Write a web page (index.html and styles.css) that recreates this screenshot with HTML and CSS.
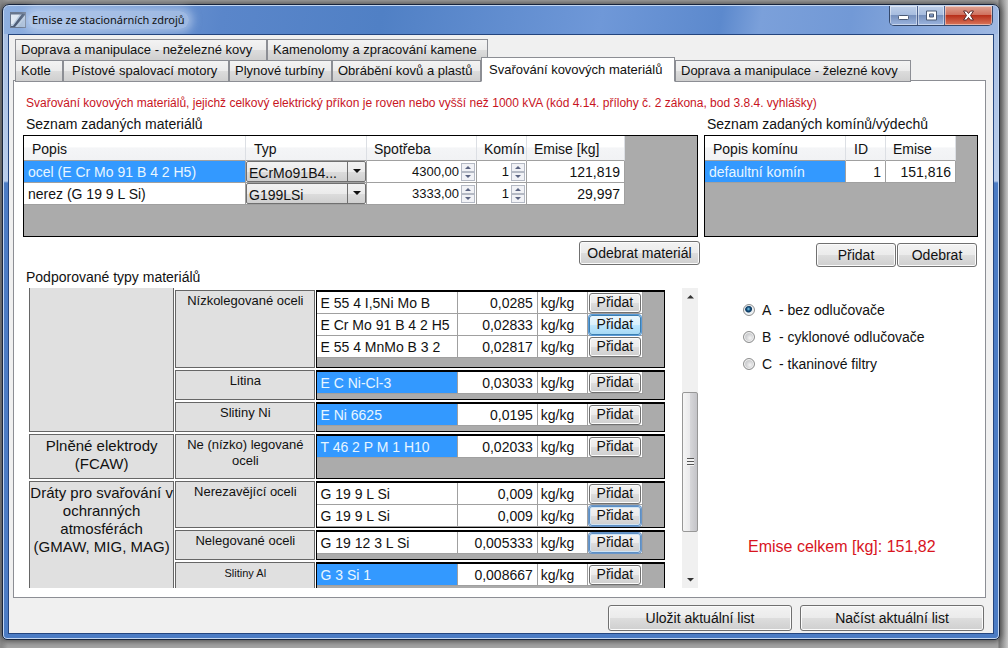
FILE: index.html
```html
<!DOCTYPE html>
<html lang="cs">
<head>
<meta charset="utf-8">
<title>Emise ze stacionárních zdrojů</title>
<link rel="stylesheet" href="styles.css">
</head>
<body>
<div class="window">
  <header class="titlebar">
    <svg class="app-icon" width="16" height="16" viewBox="0 0 16 16" aria-hidden="true">
      <rect x="0.5" y="0.5" width="15" height="15" fill="#b9cbe0" stroke="#6b7990"/>
      <path d="M1 2H10L3 12H1Z" fill="#dfe8f3"/>
      <path d="M1 1H15V2.500H1Z" fill="#66758d"/>
      <path d="M12 2H15V3L5 15H1V14H3Z" fill="#4c5c76"/>
      <path d="M15 6V15H8Z" fill="#a9bed8"/>
    </svg>
    <h1 class="title">Emise ze stacionárních zdrojů</h1>
    <div class="caption-buttons">
      <button class="cap cap-min" aria-label="Minimalizovat"><svg width="13" height="13" viewBox="0 0 13 13"><rect x="1.5" y="6.5" width="10" height="4" rx="1" fill="#fff" stroke="#4b5a74"/></svg></button>
      <button class="cap cap-max" aria-label="Maximalizovat"><svg width="13" height="13" viewBox="0 0 13 13"><path d="M1.500 2H11.500V11H1.500ZM4.500 5V8H8.500V5Z" fill="#fff" fill-rule="evenodd" stroke="#4b5a74"/></svg></button>
      <button class="cap cap-close" aria-label="Zavřít"><svg width="13" height="13" viewBox="0 0 13 13"><path d="M1.500 2H4.500L6.500 4.500L8.500 2H11.500L8.500 6.500L11.500 11H8.500L6.500 8.500L4.500 11H1.500L4.500 6.500Z" fill="#fff" stroke="#5c2a2a"/></svg></button>
    </div>
  </header>

  <main class="client">
    <nav class="tabs" role="tablist">
      <div class="tab-row">
        <button class="tab tab-w252" role="tab">Doprava a manipulace - neželezné kovy</button>
        <button class="tab tab-w221" role="tab">Kamenolomy a zpracování kamene</button>
      </div>
      <div class="tab-row">
        <button class="tab tab-w48" role="tab">Kotle</button>
        <button class="tab tab-w166" role="tab">Pístové spalovací motory</button>
        <button class="tab tab-w103" role="tab">Plynové turbíny</button>
        <button class="tab tab-w149" role="tab">Obrábění kovů a plastů</button>
        <button class="tab tab-w194 active" role="tab" aria-selected="true">Svařování kovových materiálů</button>
        <button class="tab tab-w236" role="tab">Doprava a manipulace - železné kovy</button>
      </div>
    </nav>

    <section class="page">
      <p class="notice">Svařování kovových materiálů, jejichž celkový elektrický příkon je roven nebo vyšší než 1000 kVA (kód 4.14. přílohy č. 2 zákona, bod 3.8.4. vyhlášky)</p>

      <div class="lists">
        <section class="list">
          <h2 class="label">Seznam zadaných materiálů</h2>
          <div class="grid-box">
            <table class="data">
              <colgroup><col class="c222"><col class="c121"><col class="c110"><col class="c50"><col class="c98"></colgroup>
              <thead><tr><th>Popis</th><th>Typ</th><th>Spotřeba</th><th>Komín</th><th>Emise [kg]</th></tr></thead>
              <tbody>
                <tr>
                  <td class="selected">ocel (E Cr Mo 91 B 4 2 H5)</td>
                  <td class="control"><span class="combo"><select aria-label="Typ"><option>ECrMo91B4...</option></select></span></td>
                  <td class="control"><span class="spin"><input type="text" value="4300,00" aria-label="Spotřeba"><span class="arrows"><button aria-label="Více"></button><button class="down" aria-label="Méně"></button></span></span></td>
                  <td class="control"><span class="spin"><input type="text" value="1" aria-label="Komín"><span class="arrows"><button aria-label="Více"></button><button class="down" aria-label="Méně"></button></span></span></td>
                  <td class="num">121,819</td>
                </tr>
                <tr>
                  <td>nerez (G 19 9 L Si)</td>
                  <td class="control"><span class="combo"><select aria-label="Typ"><option>G199LSi</option></select></span></td>
                  <td class="control"><span class="spin"><input type="text" value="3333,00" aria-label="Spotřeba"><span class="arrows"><button aria-label="Více"></button><button class="down" aria-label="Méně"></button></span></span></td>
                  <td class="control"><span class="spin"><input type="text" value="1" aria-label="Komín"><span class="arrows"><button aria-label="Více"></button><button class="down" aria-label="Méně"></button></span></span></td>
                  <td class="num">29,997</td>
                </tr>
              </tbody>
            </table>
          </div>
          <div class="actions actions-left"><button class="btn btn-material">Odebrat materiál</button></div>
        </section>

        <section class="list">
          <h2 class="label">Seznam zadaných komínů/výdechů</h2>
          <div class="grid-box">
            <table class="data">
              <colgroup><col class="c141"><col class="c40"><col class="c70"></colgroup>
              <thead><tr><th>Popis komínu</th><th>ID</th><th>Emise</th></tr></thead>
              <tbody><tr><td class="selected">defaultní komín</td><td class="num">1</td><td class="num">151,816</td></tr></tbody>
            </table>
          </div>
          <div class="actions"><button class="btn btn-small">Přidat</button><button class="btn btn-small">Odebrat</button></div>
        </section>
      </div>

      <div class="lower">
        <section class="supported">
          <h2 class="label">Podporované typy materiálů</h2>
          <div class="scroller">
            <div class="groups">
              <div class="group group-first">
                <div class="category"></div>
                <div class="kinds">
                  <div class="kind h78">
                    <div class="kind-name">Nízkolegované oceli</div>
                    <div class="materials"><table class="mat">
                      <tr><td>E 55 4 I,5Ni Mo B</td><td class="num">0,0285</td><td class="unit">kg/kg</td><td class="act"><button class="add">Přidat</button></td></tr>
                      <tr><td>E Cr Mo 91 B 4 2 H5</td><td class="num">0,02833</td><td class="unit">kg/kg</td><td class="act"><button class="add hot">Přidat</button></td></tr>
                      <tr><td>E 55 4 MnMo B 3 2</td><td class="num">0,02817</td><td class="unit">kg/kg</td><td class="act"><button class="add">Přidat</button></td></tr>
                    </table></div>
                  </div>
                  <div class="kind h30">
                    <div class="kind-name">Litina</div>
                    <div class="materials"><table class="mat">
                      <tr><td class="selected">E C Ni-Cl-3</td><td class="num">0,03033</td><td class="unit">kg/kg</td><td class="act"><button class="add">Přidat</button></td></tr>
                    </table></div>
                  </div>
                  <div class="kind h30">
                    <div class="kind-name">Slitiny Ni</div>
                    <div class="materials"><table class="mat">
                      <tr><td class="selected">E Ni 6625</td><td class="num">0,0195</td><td class="unit">kg/kg</td><td class="act"><button class="add">Přidat</button></td></tr>
                    </table></div>
                  </div>
                </div>
              </div>
              <div class="group">
                <div class="category">Plněné elektrody (FCAW)</div>
                <div class="kinds">
                  <div class="kind h45">
                    <div class="kind-name">Ne (nízko) legované oceli</div>
                    <div class="materials"><table class="mat">
                      <tr><td class="selected">T 46 2 P M 1 H10</td><td class="num">0,02033</td><td class="unit">kg/kg</td><td class="act"><button class="add">Přidat</button></td></tr>
                    </table></div>
                  </div>
                </div>
              </div>
              <div class="group">
                <div class="category">Dráty pro svařování v ochranných atmosférách<br>(GMAW, MIG, MAG)</div>
                <div class="kinds">
                  <div class="kind h47">
                    <div class="kind-name">Nerezavějící oceli</div>
                    <div class="materials"><table class="mat">
                      <tr><td>G 19 9 L Si</td><td class="num">0,009</td><td class="unit">kg/kg</td><td class="act"><button class="add">Přidat</button></td></tr>
                      <tr><td>G 19 9 L Si</td><td class="num">0,009</td><td class="unit">kg/kg</td><td class="act"><button class="add focus">Přidat</button></td></tr>
                    </table></div>
                  </div>
                  <div class="kind h30">
                    <div class="kind-name">Nelegované oceli</div>
                    <div class="materials"><table class="mat">
                      <tr><td>G 19 12 3 L Si</td><td class="num">0,005333</td><td class="unit">kg/kg</td><td class="act"><button class="add focus">Přidat</button></td></tr>
                    </table></div>
                  </div>
                  <div class="kind h30">
                    <div class="kind-name small">Slitiny Al</div>
                    <div class="materials"><table class="mat">
                      <tr><td class="selected">G 3 Si 1</td><td class="num">0,008667</td><td class="unit">kg/kg</td><td class="act"><button class="add">Přidat</button></td></tr>
                    </table></div>
                  </div>
                </div>
              </div>
            </div>
            <div class="scrollbar" aria-hidden="true">
              <svg class="sb-arrow" width="16" height="17" viewBox="0 0 16 17"><path d="M5 10.500L8.500 7L12 10.500Z" fill="#333"/></svg>
              <div class="track-before"></div>
              <div class="thumb"><span class="grip"></span></div>
              <div class="track-after"></div>
              <svg class="sb-arrow" width="16" height="17" viewBox="0 0 16 17"><path d="M5 7L8.500 10.500L12 7Z" fill="#333"/></svg>
            </div>
          </div>
        </section>

        <aside class="side">
          <fieldset class="filters">
            <label class="radio"><input type="radio" name="filter" checked><span class="letter">A</span><span>- bez odlučovače</span></label>
            <label class="radio"><input type="radio" name="filter"><span class="letter">B</span><span>- cyklonové odlučovače</span></label>
            <label class="radio"><input type="radio" name="filter"><span class="letter">C</span><span>- tkaninové filtry</span></label>
          </fieldset>
          <p class="total">Emise celkem [kg]: 151,82</p>
        </aside>
      </div>
    </section>

    <footer class="footer">
      <button class="btn btn-file">Uložit aktuální list</button>
      <button class="btn btn-file">Načíst aktuální list</button>
    </footer>
  </main>
</div>
</body>
</html>
```

FILE: styles.css
```css
* { box-sizing: border-box; }

body {
  margin: 0;
  height: 100vh;
  padding: 4px 8px 8px 2px;
  display: flex;
  overflow: hidden;
  background: linear-gradient(90deg, #8b8b8b 0, #8b8b8b 2px, #a5a5a5 8px, #a5a5a5 calc(100% - 10px), #777 calc(100% - 9px), #c8c8c8 100%);
  color: #111;
  font: 13px/16px "Liberation Sans", Arial, sans-serif;
}

button, input, select { font: inherit; color: inherit; margin: 0; }
h1, h2, p { margin: 0; font-weight: normal; }

.window {
  flex: 1;
  min-width: 0;
  display: flex;
  flex-direction: column;
  padding: 0 5px 5px;
  border: 1px solid #17243c;
  border-radius: 7px 7px 5px 5px;
  box-shadow: inset 0 0 0 1px #c3d6f0, 0 0 6px 1px #444;
  background: linear-gradient(#a3bce3 0, #a9c0e4 30px, #b9cdeb 176px, #4c7cc4 178px, #4c7cc4 100%);
}

/* Title bar */
.titlebar {
  height: 28px;
  display: flex;
  align-items: center;
  margin: 1px -4px 0;
  padding: 0 5px;
  border-radius: 5px 5px 0 0;
  background: linear-gradient(100deg, #8fb0e0 0, #5a86ca 22%, #5080c5 38%, #6f98d8 60%, #5c89cd 72%, #7ba0da 76%, #7299d6 85%, #9fb8e2 100%);
}
.app-icon { margin-left: 1px; }
.title {
  margin-left: 2px;
  padding: 0 4px;
  font: 11px/18px "Noto Sans", "Open Sans", sans-serif;
  background: rgba(215, 228, 246, .5);
  border-radius: 9px;
  box-shadow: 0 0 8px 4px rgba(215, 228, 246, .5);
}
.caption-buttons {
  align-self: flex-start;
  margin-left: auto;
  display: flex;
  height: 20px;
  border: 1px solid #35496c;
  border-top: 0;
  border-radius: 0 0 5px 5px;
  overflow: hidden;
}
.cap {
  width: 28px;
  padding: 0;
  display: flex;
  align-items: center;
  justify-content: center;
  border: 0;
  border-right: 1px solid #4d6390;
  box-shadow: inset 0 0 0 1px rgba(255, 255, 255, .45);
  background: linear-gradient(#bdcee8 0, #a6bcdf 48%, #7690bd 50%, #9bb4de 100%);
}
.cap-max { width: 27px; }
.cap-close { width: 47px; border-right: 0; background: linear-gradient(#dfa393 0, #cf6f5c 48%, #b8301b 50%, #d9765b 100%); }

/* Client area */
.client {
  flex: 1;
  min-height: 0;
  display: flex;
  flex-direction: column;
  padding: 4px 7px 2px 4px;
  border: 1px solid #24457e;
  background: #f0f0f0;
}

.tabs { padding-left: 2px; position: relative; margin-bottom: -1px; }
.tab-row { display: flex; height: 21px; }
.tab {
  height: 22px;
  padding: 0 2px 0 5px;
  text-align: left;
  white-space: nowrap;
  border: 1px solid #8c8e94;
  background: linear-gradient(#f3f3f3, #ebebeb 50%, #dcdcdc 52%, #cfcfcf);
}
.tab-w48 { width: 48px; }
.tab-w103 { width: 103px; }
.tab-w149 { width: 149px; }
.tab-w166 { width: 166px; padding-left: 8px; }
.tab-w194 { width: 194px; }
.tab-w221 { width: 221px; }
.tab-w236 { width: 236px; }
.tab-w252 { width: 252px; }
.tab.active {
  height: 25px;
  margin-top: -3px;
  padding-left: 7px;
  z-index: 1;
  background: #fff;
  border-bottom-color: #fff;
}

.page {
  flex: 1;
  min-height: 0;
  display: flex;
  flex-direction: column;
  padding: 14px 7px 9px 9px;
  background: #fff;
  border: 1px solid #8c8e94;
}
.notice { padding-left: 3px; font-size: 12px; color: #c8141e; white-space: nowrap; }
.label { padding-left: 3px; font-size: 14px; line-height: 16px; white-space: nowrap; }

.lists { display: grid; grid-template-columns: 675fr 274fr; gap: 6px; margin-top: 5px; }
.list { min-width: 0; }
.grid-box { margin-top: 3px; height: 102px; border: 1px solid #000; background: #ababab; overflow: hidden; }

table { border-collapse: separate; border-spacing: 0; table-layout: fixed; font-size: 14px; }
.data { width: 1px; }
.c222 { width: 222px; } .c121 { width: 121px; } .c110 { width: 110px; } .c50 { width: 50px; } .c98 { width: 98px; }
.c141 { width: 141px; } .c40 { width: 40px; } .c70 { width: 70px; }
.data th {
  height: 25px;
  padding: 2px 0 0 8px;
  text-align: left;
  font-weight: normal;
  white-space: nowrap;
  border-right: 1px solid #dcdfe4;
  border-bottom: 1px solid #a0a0a0;
  background: linear-gradient(#fff, #fff 45%, #f4f5f7 50%, #f1f2f4);
}
.data th:nth-child(n + 3) { padding-left: 7px; }
td { background: #fff; white-space: nowrap; }
.data td { height: 22px; padding: 0 4px; border-right: 1px solid #a0a0a0; border-bottom: 1px solid #a0a0a0; }
.data td.control { padding: 0; }
td.selected { background: #3399ff; color: #e8f6ff; }
td.num { text-align: right; }

.combo { display: block; position: relative; height: 21px; }
.combo select {
  width: 100%;
  height: 21px;
  padding: 2px 4px 0 2px;
  appearance: none;
  border: 1px solid #707070;
  border-radius: 2px;
  background: linear-gradient(#f2f2f2, #ebebeb 50%, #dcdcdc 52%, #cfcfcf);
}
.combo::after {
  content: "";
  position: absolute;
  top: 1px; right: 1px; bottom: 1px;
  width: 17px;
  border-left: 1px solid #707070;
  pointer-events: none;
}
.combo::before {
  content: "";
  position: absolute;
  top: 8px; right: 5px;
  border: 4px solid transparent;
  border-top-color: #111;
  border-bottom: 0;
  pointer-events: none;
}

.spin { display: flex; height: 21px; align-items: center; padding-right: 1px; font-size: 13px; }
.spin input { flex: 1; min-width: 0; width: 10px; height: 20px; padding: 0 2px; border: 0; background: #fff; text-align: right; }
.arrows { display: flex; flex-direction: column; width: 14px; height: 18px; }
.arrows button {
  flex: 1;
  min-height: 0;
  padding: 0;
  display: flex;
  align-items: center;
  justify-content: center;
  border: 1px solid #b4b9c4;
  background: #f1f2f6;
}
.arrows button::before { content: ""; border: 3px solid transparent; border-bottom-color: #5b6482; border-top: 0; }
.arrows button.down::before { border: 3px solid transparent; border-top-color: #5b6482; border-bottom: 0; }

.btn, .add {
  padding: 0;
  text-align: center;
  white-space: nowrap;
  border: 1px solid #707070;
  border-radius: 3px;
  box-shadow: inset 0 0 0 1px #fbfbfb;
  background: linear-gradient(#f3f3f3, #ebebeb 50%, #dddddd 52%, #cfcfcf);
}
.actions { display: flex; justify-content: flex-end; gap: 1px; padding: 6px 1px 0 0; }
.actions-left { padding-top: 4px; margin-right: -3px; }
.btn { height: 24px; font-size: 14px; }
.btn-material { width: 121px; }
.btn-small { width: 80px; }
.btn-file { width: 184px; height: 26px; }

.lower { flex: 1; min-height: 0; display: grid; grid-template-columns: 675fr 274fr; gap: 6px; margin-top: 2px; }
.supported { min-width: 0; min-height: 0; display: flex; flex-direction: column; }
.scroller { flex: 1; min-height: 0; margin-top: 3px; padding-left: 6px; display: flex; gap: 17px; overflow: hidden; }
.groups { flex: 1; min-width: 0; display: flex; flex-direction: column; gap: 2px; }
.group { flex: none; display: grid; grid-template-columns: 145fr 489fr; gap: 1px; }
.category { border: 1px solid #666; background: #e0e0e0; padding: 2px 0 0; text-align: center; font-size: 15px; line-height: 18px; }
.group-first .category { border-top: 0; }
.group-first .kinds { padding-top: 2px; }
.group:last-child .category { margin-bottom: -4px; }
.kinds { display: flex; flex-direction: column; gap: 2px; }
.kind { display: grid; grid-template-columns: 140fr 348fr; gap: 1px; }
.h78 { min-height: 78px; } .h30 { min-height: 30px; } .h45 { min-height: 45px; } .h47 { min-height: 47px; }
.kind-name { border: 1px solid #666; background: #e0e0e0; padding: 2px 3px 0; text-align: center; }
.kind-name.small { font-size: 11px; }
.materials { border: 1px solid #000; border-top-width: 2px; background: #ababab; overflow: hidden; padding-right: 21px; }
.mat { width: 100%; }
.mat td { width: 140px; height: 22px; padding: 0 3px; border-right: 1px solid #a0a0a0; border-bottom: 1px solid #a0a0a0; }
.mat td.num { width: 80px; padding-right: 4px; }
.mat td.unit { width: 50px; }
.mat td.act { width: 55px; padding: 0 1px; }
.add { display: block; width: 52px; height: 20px; line-height: 17px; }
.add.hot { border-color: #3c7fb1; box-shadow: 0 0 0 1px #5a9bd8; background: linear-gradient(#eaf6fd, #d9f0fc 50%, #bee6fd 52%, #a7d9f5); }
.add.focus { border-color: #5d8fc4; box-shadow: 0 0 0 1px #6a96c8, inset 0 0 0 1px #cfe4f5; }

.scrollbar { width: 16px; display: flex; flex-direction: column; background: #f0f0f0; }
.sb-arrow { flex: none; display: block; }
.track-before { flex: 88 1 0; }
.track-after { flex: 39 1 0; }
.thumb {
  flex: 139 1 0;
  display: flex;
  align-items: center;
  justify-content: center;
  border: 1px solid #979797;
  border-radius: 2px;
  background: linear-gradient(90deg, #f5f5f5, #e9e9eb 50%, #d6d6d9 52%, #c4c4c8);
}
.grip { width: 7px; height: 8px; background: repeating-linear-gradient(#555 0, #555 1px, #f4f4f4 1px, #f4f4f4 3px); }

.side { min-width: 0; display: flex; flex-direction: column; }
.filters { margin: 0; border: 0; padding: 33px 0 0 39px; display: flex; flex-direction: column; gap: 11px; }
.radio { display: flex; align-items: center; font-size: 14px; line-height: 16px; white-space: nowrap; }
.radio input {
  appearance: none;
  width: 12px;
  height: 12px;
  margin-right: 7px;
  border: 1px solid #8e8f8f;
  border-radius: 50%;
  background: radial-gradient(circle at 60% 60%, #f4f4f4 0, #cfd0d2 4px);
  box-shadow: inset 0 0 0 1px #f4f4f4;
}
.radio input:checked { background: radial-gradient(circle at 45% 40%, #7fd0f0 0, #134a77 2px, #0b3860 3px, #e8eef2 4px); }
.letter { width: 17px; }
.total { margin-top: auto; padding: 0 0 32px 44px; font-size: 16px; line-height: 18px; color: #d8141e; white-space: nowrap; }

.footer { display: flex; justify-content: flex-end; gap: 8px; padding: 7px 2px 0 0; }
```
